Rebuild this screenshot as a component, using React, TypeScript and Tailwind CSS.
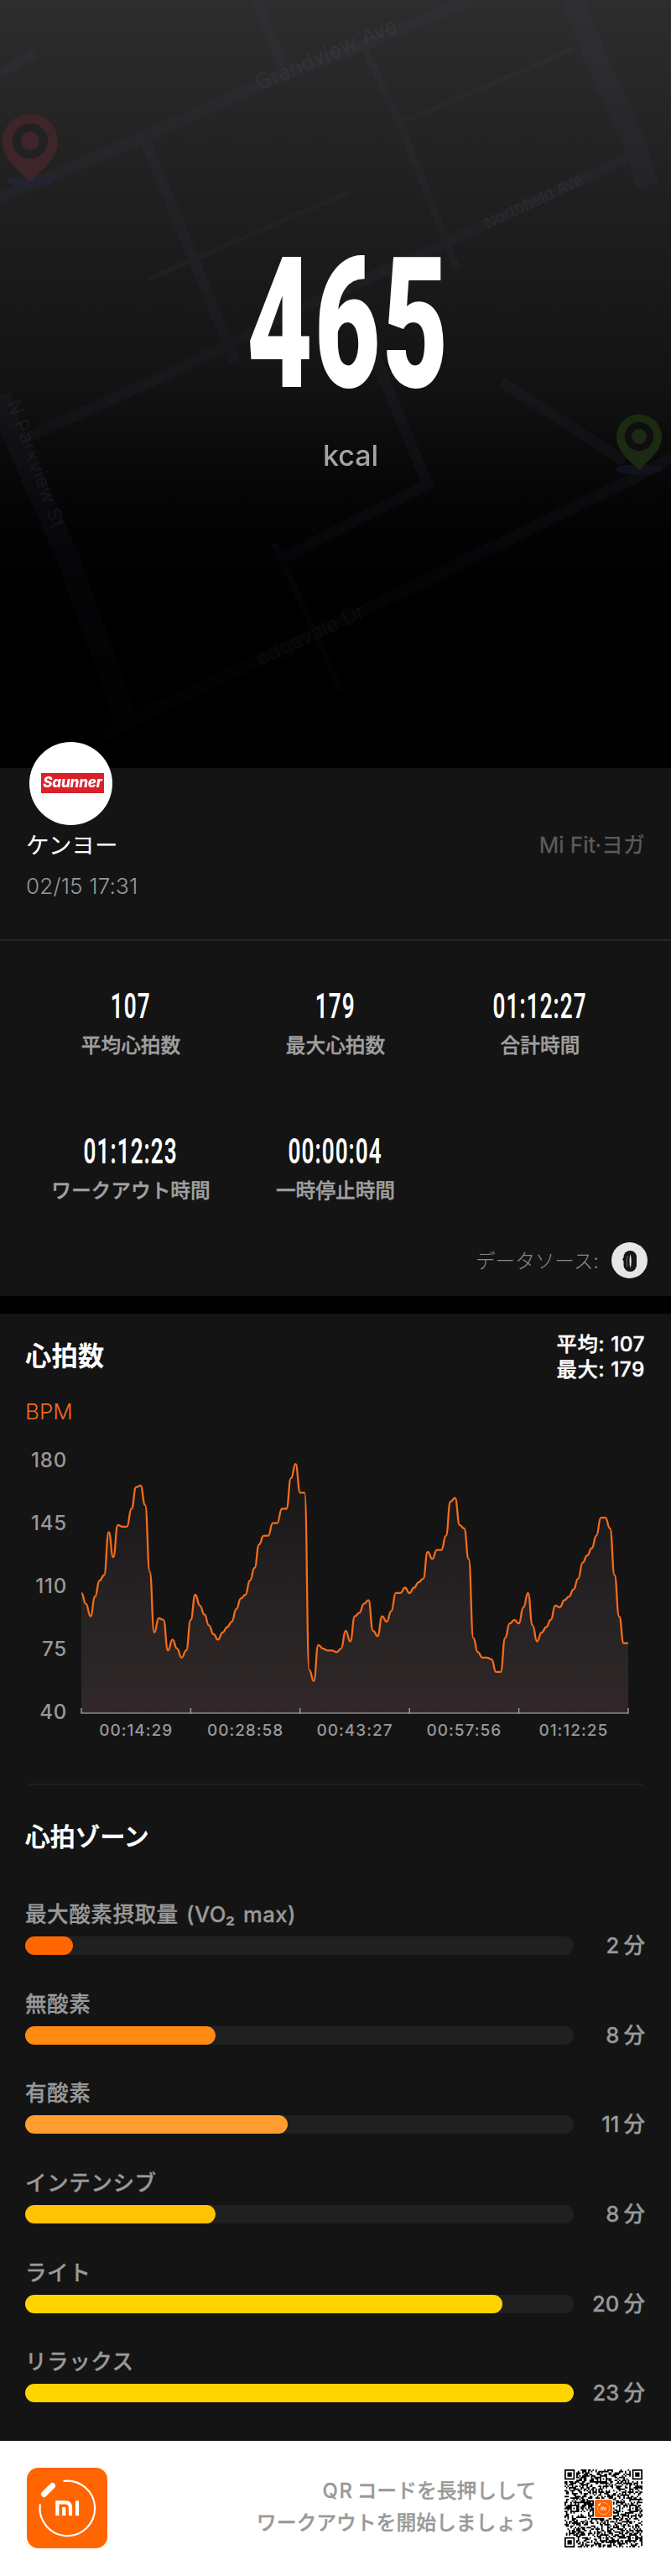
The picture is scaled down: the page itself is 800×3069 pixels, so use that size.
interface Stat {
  value: string
  label: string
}

interface Zone {
  name: string
  minutes: number
  color: string
}

const stats: Stat[] = [
  { value: '107', label: '平均心拍数' },
  { value: '179', label: '最大心拍数' },
  { value: '01:12:27', label: '合計時間' },
  { value: '01:12:23', label: 'ワークアウト時間' },
  { value: '00:00:04', label: '一時停止時間' },
]

const zones: Zone[] = [
  { name: '最大酸素摂取量 (VO₂ max)', minutes: 2, color: 'bg-[#ff6600]' },
  { name: '無酸素', minutes: 8, color: 'bg-[#ff8a12]' },
  { name: '有酸素', minutes: 11, color: 'bg-[#ff9d2f]' },
  { name: 'インテンシブ', minutes: 8, color: 'bg-[#ffc303]' },
  { name: 'ライト', minutes: 20, color: 'bg-[#ffd500]' },
  { name: 'リラックス', minutes: 23, color: 'bg-[#ffd500]' },
]

const maxMinutes = 23

const bpm = [
  107, 101, 94, 105, 114, 117, 141, 127, 145, 144, 144, 154, 166, 167, 156, 119, 85, 93, 92, 75,
  81, 76, 71, 75, 92, 106, 100, 95, 89, 84, 81, 85, 88, 91, 98, 104, 106, 114, 121, 134,
  139, 139, 146, 146, 154, 154, 171, 179, 163, 163, 64, 58, 78, 76, 75, 75, 74, 76, 86, 80,
  94, 96, 101, 103, 86, 83, 94, 91, 97, 107, 107, 110, 107, 110, 113, 115, 130, 126, 131, 131,
  139, 158, 160, 145, 143, 126, 82, 74, 71, 71, 70, 63, 63, 82, 90, 92, 90, 99, 107, 89,
  80, 85, 88, 92, 100, 99, 103, 105, 109, 115, 124, 128, 132, 139, 149, 149, 143, 117, 94, 79, 79,
]

const yTicks = [180, 145, 110, 75, 40]
const xTicks = ['00:14:29', '00:28:58', '00:43:27', '00:57:56', '01:12:25']

const CHART_W = 652
const CHART_H = 300

function buildLine() {
  const step = CHART_W / (bpm.length - 1)
  const y = (v: number) => CHART_H - ((v - 40) / 140) * 299
  return bpm
    .map((v, i) => {
      const x = i * step
      if (i === 0) return `M0 ${y(v).toFixed(1)}`
      const mid = (x - step / 2).toFixed(1)
      return `C${mid} ${y(bpm[i - 1]).toFixed(1)} ${mid} ${y(v).toFixed(1)} ${x.toFixed(1)} ${y(v).toFixed(1)}`
    })
    .join('')
}

function Pin({ x, y, r, color, hole, shadow }: { x: number; y: number; r: number; color: string; hole: string; shadow: string }) {
  return (
    <g transform={`translate(${x} ${y}) scale(${r / 33})`}>
      <ellipse cx="0" cy="48" rx={28 * (33 / r)} ry={6 * (33 / r)} fill={shadow} />
      <path d="M0 -32C-19 -32 -33 -18 -33 1C-33 20 -17 32 0 49C17 32 33 20 33 1C33 -18 19 -32 0 -32Z" fill={color} />
      <circle r="21" fill={hole} />
      <circle r="11" fill={color} />
    </g>
  )
}

function MapBackdrop() {
  return (
    <svg className="absolute inset-0" width="800" height="915" viewBox="0 0 800 915" fill="none">
      <defs>
        <linearGradient id="fade" x1="0" y1="0" x2="0" y2="915" gradientUnits="userSpaceOnUse">
          <stop offset="0" stopColor="#fff" />
          <stop offset="0.65" stopColor="#ccc" />
          <stop offset="0.95" stopColor="#444" />
          <stop offset="1" stopColor="#000" />
        </linearGradient>
        <mask id="mapMask">
          <rect width="800" height="915" fill="url(#fade)" />
        </mask>
      </defs>
      <g mask="url(#mapMask)">
        <g stroke="#46466e" opacity="0.12">
          <path d="M-5 237L168 165L306 103L434 53L561 0" strokeWidth="14" />
          <path d="M0 88L42 63" strokeWidth="12" />
          <path d="M305 0L339 80" strokeWidth="13" />
          <path d="M173 167L230 307L281 433" strokeWidth="13" />
          <path d="M176 333L413 230" strokeWidth="6" />
          <path d="M434 57L477 147L533 290L545 322" strokeWidth="9" />
          <path d="M477 147L684 58" strokeWidth="6" />
          <path d="M684 0L709 67L755 167L772 222" strokeWidth="27" />
          <path d="M765 180L531 290L342 375L270 412L173 458L28 523" strokeWidth="13" />
          <path d="M428 370L460 458L510 577L337 665" strokeWidth="13" />
          <path d="M598 455L745 550" strokeWidth="13" />
          <path d="M0 470L10 503L82 667L153 865" strokeWidth="27" />
          <path d="M805 543L755 570L434 727L168 853L117 880" strokeWidth="14" />
          <path d="M327 647L375 753L406 823" strokeWidth="8" />
        </g>
        <g fill="#6a6a78" opacity="0.15" fontFamily="Inter, sans-serif" fontSize="25">
          <text transform="translate(309 108) rotate(-23)" textLength="181">Grandview Ave</text>
          <text transform="translate(581 273) rotate(-25)" textLength="128" fontSize="19">Northfield Ave</text>
          <text transform="translate(310 794) rotate(-25)" textLength="140">edgevale Dr</text>
          <text transform="translate(8 480) rotate(70)" textLength="160" fontSize="23">N Parkview St</text>
        </g>
      </g>
      <Pin x={36} y={168} r={33} color="#3e2529" hole="#212121" shadow="#232333" />
      <Pin x={762} y={520} r={27} color="#1b2a12" hole="#0e0e0e" shadow="#12121f" />
    </svg>
  )
}

function MiLogo({ className }: { className?: string }) {
  return (
    <svg className={className} viewBox="0 0 96 96" fill="none">
      <rect width="96" height="96" rx="14" fill="#ff6500" />
      <path d="M44.5 15.8A32.8 32.8 0 1 1 15.8 44" stroke="#fff" strokeWidth="2.2" strokeLinecap="round" />
      <path d="M20.5 31.5L30.5 21.5" stroke="#fff" strokeWidth="7" strokeLinecap="round" />
      <path d="M36.3 57V41.4H45.5Q52 41.4 52 47.5V57" stroke="#fff" strokeWidth="4.2" />
      <path d="M44.2 47V57M60 39.3V57" stroke="#fff" strokeWidth="4.2" />
    </svg>
  )
}

const QR_SIZE = 53

function buildQr() {
  let seed = 20240215
  const rand = () => {
    seed = (seed * 1103515245 + 12345) % 2147483648
    return seed / 2147483648
  }
  const grid = Array.from({ length: QR_SIZE }, () => Array.from({ length: QR_SIZE }, () => rand() > 0.5))

  // ring pattern around a centre: dark rings at the given distances
  const stamp = (cx: number, cy: number, size: number, dark: number[]) => {
    for (let dy = -size; dy <= size; dy++) {
      for (let dx = -size; dx <= size; dx++) {
        const row = grid[cy + dy]
        if (!row || cx + dx < 0 || cx + dx >= QR_SIZE) continue
        row[cx + dx] = dark.includes(Math.max(Math.abs(dx), Math.abs(dy)))
      }
    }
  }
  ;[[26, 6], [6, 26], [46, 26], [26, 46], [46, 46]].forEach(([x, y]) => stamp(x, y, 2, [0, 2]))
  ;[[3, 3], [49, 3], [3, 49]].forEach(([x, y]) => stamp(x, y, 4, [0, 1, 3]))
  stamp(26, 26, 6, [])

  let d = ''
  grid.forEach((row, y) => row.forEach((on, x) => {
    if (on) d += `M${x} ${y}h1v1h-1z`
  }))
  return d
}

function QrCode() {
  return (
    <div className="relative size-[93px]">
      <svg className="size-full" viewBox="0 0 53 53">
        <path d={buildQr()} fill="#000" />
      </svg>
      <MiLogo className="absolute top-[36px] left-[36px] size-[21px]" />
    </div>
  )
}

function HeartRateChart() {
  const line = buildLine()
  return (
    <div className="mt-[27px] flex pl-[31px]">
      <div className="flex w-[49px] flex-col gap-[45px] text-right text-[24px] leading-[30px] font-medium tracking-[0.8px] text-[#98989a]">
        {yTicks.map(t => (
          <span key={t}>{t}</span>
        ))}
      </div>
      <div className="ml-[17px] w-[652px] pt-[16px]">
        <svg className="block overflow-visible" width={CHART_W} height={CHART_H} fill="none">
          <defs>
            <linearGradient id="area" x1="0" y1="0" x2="0" y2="300" gradientUnits="userSpaceOnUse">
              <stop offset="0" stopColor="#161415" />
              <stop offset="0.5" stopColor="#252122" />
              <stop offset="0.9" stopColor="#2d2627" />
              <stop offset="1" stopColor="#34272a" />
            </linearGradient>
          </defs>
          <path d={`${line}V300H0Z`} fill="url(#area)" />
          <path d={line} stroke="#f46c1b" strokeWidth="2.3" strokeLinejoin="round" />
          <path d="M0 300H652" stroke="#8a8a8a" strokeWidth="1.4" />
          {[0, 1, 2, 3, 4, 5].map(i => (
            <path key={i} d={`M${i * 130.4} 294V300.5`} stroke="#a0a0a0" strokeWidth="1.4" />
          ))}
        </svg>
        <div className="mt-[8px] grid grid-cols-5 text-center text-[19px] leading-[26px] font-medium tracking-[1px] text-[#98989a]">
          {xTicks.map(t => (
            <span key={t}>{t}</span>
          ))}
        </div>
      </div>
    </div>
  )
}

export default function App() {
  return (
    <div className="w-[800px] bg-[#141414] font-['Inter','Noto_Sans_CJK_JP',sans-serif] text-white">
      {/* Hero */}
      <div className="relative h-[915px] overflow-hidden bg-linear-to-b from-[#2d2d2d] via-[#131313] via-50% to-black to-90%">
        <MapBackdrop />
        <div className="relative flex flex-col items-center pt-[287px] pl-[32px]">
          <div className="scale-x-[0.62] font-['Roboto'] text-[218px] leading-[200px] font-black tracking-[4px]">465</div>
          <div className="mt-[36px] pl-[4px] text-[34px] leading-[40px] font-medium text-[#a3a3a3]">kcal</div>
        </div>
      </div>

      {/* User */}
      <div className="relative h-[206px] border-b-2 border-[#242424] px-[31px] pt-[73px]">
        <div className="absolute -top-[31px] left-[35px] flex size-[99px] items-center justify-center rounded-full bg-white">
          <div className="-mt-[2px] ml-[4px] flex h-[24px] w-[75px] items-center justify-center bg-[#d9212c] text-[17px] leading-none font-extrabold tracking-[-0.2px] italic">
            Saunner
          </div>
        </div>
        <div className="flex items-center justify-between">
          <span className="text-[27.6px] leading-[38px]">ケンヨー</span>
          <span className="text-[26px] leading-[38px] text-[#5c5c5c] [-webkit-text-stroke:0.3px]">Mi Fit·ヨガ</span>
        </div>
        <div className="mt-[11px] text-[26px] leading-[38px] font-light tracking-[0.2px] text-[#999]">02/15 17:31</div>
      </div>

      {/* Stats */}
      <div className="h-[423px] pt-[57px]">
        <div className="grid grid-cols-3 gap-y-[83px] px-[34px]">
          {stats.map(s => (
            <div key={s.label} className="flex h-[90px] flex-col items-center">
              <span className="scale-x-[0.62] font-['Roboto'] text-[42px] leading-[42px] font-semibold tracking-[1.8px]">{s.value}</span>
              <span className="mt-[9px] text-[23.7px] leading-[34px] font-medium whitespace-nowrap text-[#a0a0a0] [-webkit-text-stroke:0.4px]">{s.label}</span>
            </div>
          ))}
        </div>
        <div className="mt-[39px] flex items-center justify-end pr-[28px]">
          <span className="pt-[3px] text-[23.6px] leading-[34px] font-light text-[#8a8a8a]">データソース:</span>
          <svg className="ml-[15px]" width="43" height="43" viewBox="0 0 43 43">
            <circle cx="21.5" cy="21.5" r="21.5" fill="#e6e6e6" />
            <path d="M13 20L16 17V25Z" fill="#161616" />
            <rect x="14.5" y="10" width="15.5" height="25" rx="7.5" fill="#161616" />
            <path d="M22.5 14Q25 22 22.5 31Q20.5 22 22.5 14Z" fill="#e6e6e6" />
            <path d="M19 16Q17.6 22 19 29" stroke="#8a8a8a" strokeWidth="0.8" fill="none" />
          </svg>
        </div>
      </div>

      <div className="h-[21px] bg-black" />

      {/* Heart rate */}
      <div className="h-[561px] pt-[21px]">
        <div className="flex items-start justify-between pr-[31px] pl-[30px]">
          <h2 className="pt-[10px] text-[31.4px] leading-[40px] font-bold">心拍数</h2>
          <div className="text-[24.4px] leading-[30px] font-medium tracking-[0.5px] [-webkit-text-stroke:0.4px]">
            <div>平均: 107</div>
            <div>最大: 179</div>
          </div>
        </div>
        <div className="mt-[20px] pl-[30px] text-[26px] leading-[32px] font-light text-[#f26b1d]">BPM</div>
        <HeartRateChart />
      </div>

      {/* Zones */}
      <div className="h-[783px]">
        <div className="mx-[34px] -mt-px h-[2px] bg-[#202020]" />
        <h2 className="mt-[41px] pl-[30px] text-[29.8px] leading-[40px] font-medium [-webkit-text-stroke:0.7px]">心拍ゾーン</h2>
        <div className="mt-[55px] flex flex-col gap-[25.7px]">
          {zones.map(z => (
            <div key={z.name} className="h-[81px] pr-[31px] pl-[30px]">
              <div className="text-[25.6px] leading-[36px] font-medium tracking-[0.5px] text-[#999] [-webkit-text-stroke:0.3px] [word-spacing:2px]">{z.name}</div>
              <div className="mt-[1px] flex items-center justify-between">
                <div className="h-[22px] w-[654px] rounded-full bg-[#202020]">
                  <div className={`h-full rounded-full ${z.color}`} style={{ width: `${(z.minutes / maxMinutes) * 100}%` }} />
                </div>
                <span className="flex gap-[5px] text-[25.6px] leading-[36px] font-medium text-[#999] [-webkit-text-stroke:0.3px]">
                  <span>{z.minutes}</span>
                  <span>分</span>
                </span>
              </div>
            </div>
          ))}
        </div>
      </div>

      {/* Footer */}
      <div className="flex h-[160px] items-center bg-white pr-[34px] pl-[32px]">
        <MiLogo className="size-[96px]" />
        <div className="-mt-[3px] ml-auto text-right text-[23.8px] leading-[38px] font-medium text-[#999] [-webkit-text-stroke:0.3px]">
          <div>
            <span className="mr-[4px] tracking-[1.6px]">QR</span>コードを長押しして
          </div>
          <div>ワークアウトを開始しましょう</div>
        </div>
        <div className="ml-[34px]">
          <QrCode />
        </div>
      </div>
    </div>
  )
}
